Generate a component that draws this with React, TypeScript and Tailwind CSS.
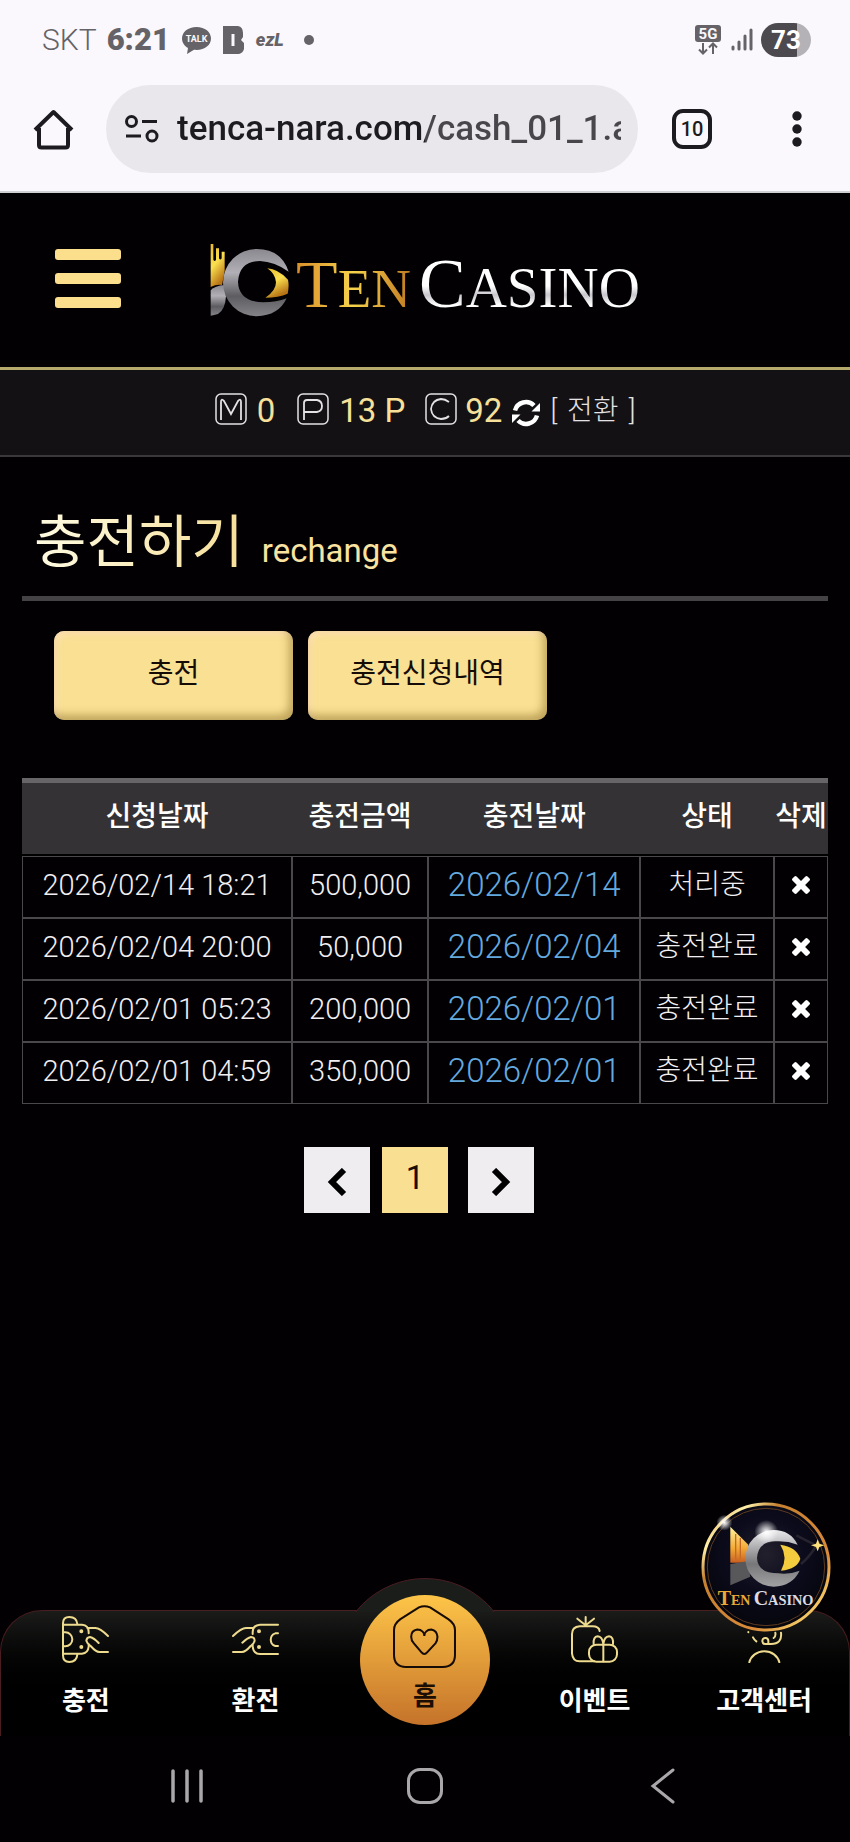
import React from 'react';

const history = [
  { requested: '2026/02/14 18:21', amount: '500,000', date: '2026/02/14', status: '처리중' },
  { requested: '2026/02/04 20:00', amount: '50,000', date: '2026/02/04', status: '충전완료' },
  { requested: '2026/02/01 05:23', amount: '200,000', date: '2026/02/01', status: '충전완료' },
  { requested: '2026/02/01 04:59', amount: '350,000', date: '2026/02/01', status: '충전완료' },
];

const StatusBar: React.FC = () => (
  <div className="flex items-center justify-between pl-[42px] pr-[39px] h-20 text-[#656367]">
    <div className="flex items-center">
      <span className="text-[30px] leading-9 font-light">SKT</span>
      <span className="text-[31px] leading-9 font-black ml-[10px]">6:21</span>
      <svg className="ml-3 w-[29px] h-[27px]" viewBox="0 0 29 27" fill="currentColor">
        <path d="M14.500 0C6 0 0 5 0 11.500c0 4 2.500 7.500 6 9.500l-1 6 7-4.200c10 1 17-4.300 17-11.300C29 5 23 0 14.500 0z" />
        <text x="14.500" y="15" fontSize="9" fontWeight="700" textAnchor="middle" fill="#faf8fc">TALK</text>
      </svg>
      <svg className="ml-3 w-[21px] h-[28px]" viewBox="0 0 21 28" fill="currentColor" fillRule="evenodd">
        <path d="M0 0h15q5 1 5 7v4l-2 3 3 3v6q-1 4-5 5H0zM8.500 8v12h3V8z" />
      </svg>
      <span className="ml-3 text-lg leading-6 font-black italic">ezL</span>
      <span className="ml-5 size-[10px] rounded-full bg-[#656367]" />
    </div>
    <div className="flex items-center">
      <svg className="w-[26px] h-[30px]" viewBox="0 0 26 30">
        <rect width="26" height="17" rx="3" fill="currentColor" />
        <text x="13" y="14" fontSize="15" fontWeight="700" textAnchor="middle" fill="#faf8fc">5G</text>
        <path d="M8 18v10M4 24.500l4 4 4-4M18 29V19M14 22.500l4-4 4 4" fill="none" stroke="currentColor" strokeWidth="2" />
      </svg>
      <svg className="ml-[10px] w-[22px] h-6" viewBox="0 0 22 24" stroke="currentColor" strokeWidth="3" strokeLinecap="round">
        <path d="M2 19v2M8 14v7M14 8v13M20 2v19" />
      </svg>
      <span className="ml-2 w-[50px] h-[34px] rounded-full bg-linear-to-r from-[#4c4a4e] from-72% to-[#b4b2b6] to-72% text-white text-[26px] leading-[34px] font-bold text-center">73</span>
    </div>
  </div>
);

const AddressBar: React.FC = () => (
  <div className="flex items-center pl-[33px] pr-[43px] pt-[5px] pb-[18px] border-b-2 border-[#cfd0d2] text-[#1c1b20]">
    <button aria-label="Home">
      <svg className="w-[41px] h-[41px]" viewBox="0 0 41 41" fill="none" stroke="currentColor" strokeWidth="4" strokeLinejoin="round">
        <path d="M2 21L20.500 3L39 21M6 19V36q0 2.500 2.500 2.500h24q2.500 0 2.500-2.500V19" />
      </svg>
    </button>
    <div className="ml-8 flex-1 min-w-0 h-22 rounded-full bg-[#e9e7ec] flex items-center pl-[19px] pr-[17px]">
      <svg className="w-[34px] h-7 shrink-0" viewBox="0 0 34 28" fill="none" stroke="currentColor" strokeWidth="3">
        <circle cx="6.500" cy="6.500" r="5" />
        <path d="M17 6.500H32M1 21H16" />
        <circle cx="27" cy="21" r="5" />
      </svg>
      <input
        aria-label="Address"
        readOnly
        value="tenca-nara.com/cash_01_1.asp"
        className="ml-[18px] flex-1 min-w-0 h-12 text-[35px] font-medium text-transparent bg-clip-text bg-linear-to-r from-[#1c1b20] from-[248px] to-[#48464b] to-[248px] outline-none"
      />
    </div>
    <button className="ml-[34px] size-10 rounded-[11px] border-4 border-[#1c1b20] text-xl leading-8 font-medium" aria-label="10 tabs">10</button>
    <button className="ml-[75px]" aria-label="More">
      <svg className="w-5 h-10" viewBox="0 0 20 40" fill="currentColor">
        <circle cx="10" cy="7" r="4.700" />
        <circle cx="10" cy="20" r="4.700" />
        <circle cx="10" cy="33" r="4.700" />
      </svg>
    </button>
  </div>
);

const LogoMark: React.FC = () => (
  <svg className="w-20 h-[74px]" viewBox="0 0 240 222">
    <defs>
      <linearGradient id="gold" x1="0" y1="0" x2="0.400" y2="1">
        <stop offset="0" stopColor="#e8b92f" />
        <stop offset="0.500" stopColor="#fbe04f" />
        <stop offset="1" stopColor="#b87416" />
      </linearGradient>
      <linearGradient id="steel" x1="0" y1="0" x2="0" y2="1">
        <stop offset="0" stopColor="#8b8990" />
        <stop offset="0.350" stopColor="#b2b0b6" />
        <stop offset="0.700" stopColor="#5d5c60" />
        <stop offset="1" stopColor="#848388" />
      </linearGradient>
    </defs>
    <path fill="url(#gold)" d="M2 3H10V50q4 8 8 0V16H27V46q4 7 8 0V26H44V84L36 126Q18 124 2 132Z" />
    <path fill="url(#steel)" d="M2 218V142Q14 128 44 126L48 160Q46 200 24 213Q12 217 2 218Z" />
    <path fill="url(#steel)" d="M236 86Q214 18 140 18A101 101 0 0 0 140 220Q206 218 230 166Q200 178 160 178Q86 176 84 116Q88 54 150 54Q194 56 236 86Z" />
    <path fill="url(#gold)" d="M172 76Q204 78 234 110Q238 128 233 152Q206 164 166 164Q198 144 198 118Q196 92 172 76Z" />
  </svg>
);

const SiteHeader: React.FC = () => (
  <header className="grid grid-cols-[1fr_auto_1fr] items-center px-[55px] h-[177px] border-b-[3px] border-[#b5aa6c]">
    <button aria-label="Menu" className="mb-1 flex flex-col gap-[13px] w-[66px]">
      <span className="h-[11px] rounded-[3px] bg-[#fbdf8c]" />
      <span className="h-[11px] rounded-[3px] bg-[#fbdf8c]" />
      <span className="h-[11px] rounded-[3px] bg-[#fbdf8c]" />
    </button>
    <a href="#" className="flex items-center font-['Liberation_Serif',serif] leading-[70px]">
      <LogoMark />
      <span className="ml-[6px] mt-3 text-[68px] text-transparent bg-clip-text bg-linear-to-r from-[#d98f2b] via-[#f6d24b] to-[#c07a22]">
        T<span className="text-[55px]">EN</span>
      </span>
      <span className="ml-2 mt-3 text-[70px] text-transparent bg-clip-text bg-linear-to-b from-white from-50% via-[#c9c7cd] via-62% to-white to-76%">
        C<span className="text-[57px]">ASINO</span>
      </span>
    </a>
  </header>
);

const LetterIcon: React.FC<{ d: string; label: string }> = ({ d, label }) => (
  <svg role="img" aria-label={label} className="w-8 h-8 mb-1" viewBox="0 0 32 32" fill="none" stroke="#e4e2e5" strokeWidth="1.500">
    <rect x="1" y="1" width="30" height="30" rx="5" />
    <path d={d} strokeWidth="1.800" />
  </svg>
);

const Balance: React.FC = () => (
  <div className="flex items-center justify-center h-[87px] pb-1 bg-[#131114] border-b-2 border-[#3a383b] text-[33px] leading-10 text-[#f7e09a]">
    <LetterIcon label="Money" d="M6 27V9q0-4 3-1l7 13 7-13q3-3 3 1v18" />
    <span className="ml-[10px]">0</span>
    <span className="ml-[22px]"><LetterIcon label="Point" d="M7 27V10q0-3 3-3h10q5 1 5 6t-5 6H7" /></span>
    <span className="ml-[10px]">13 P</span>
    <span className="ml-5"><LetterIcon label="Coupon" d="M24 9q-4-3-8-3-9 1-10 10 1 9 10 10 5 0 8-3" /></span>
    <span className="ml-2">92</span>
    <button className="ml-[10px] flex items-center text-[28px] font-light text-[#e4e2e5]">
      <svg className="w-7 h-7 mt-1" viewBox="0 0 28 28" fill="#fff">
        <path d="M3 11.500A11.300 11.300 0 0 1 22 6.500" fill="none" stroke="#fff" strokeWidth="4.500" />
        <path d="M28 4v8.500h-8.500z" />
        <path d="M25 16.500A11.300 11.300 0 0 1 6 21.500" fill="none" stroke="#fff" strokeWidth="4.500" />
        <path d="M0 24v-8.500h8.500z" />
      </svg>
      <span className="ml-[10px] flex gap-[10px]"><span>[</span><span>전환</span><span>]</span></span>
    </button>
  </div>
);

const GoldButton: React.FC<{ children: React.ReactNode }> = ({ children }) => (
  <button className="w-[239px] h-[89px] pb-1 rounded-[10px] bg-[#f9e093] text-[28px] text-[#150c08] shadow-[inset_-4px_-5px_8px_rgba(120,90,20,0.45),inset_3px_3px_6px_rgba(255,225,185,0.9)]">
    {children}
  </button>
);

const HistoryTable: React.FC = () => (
  <table className="mt-[58px] w-full table-fixed border-separate border-spacing-0 text-[28px] leading-9 text-center text-[#f1eff2]">
    <colgroup>
      <col className="w-[33.5%]" />
      <col className="w-[16.9%]" />
      <col className="w-[26.3%]" />
      <col className="w-[16.6%]" />
      <col className="w-[6.7%]" />
    </colgroup>
    <thead>
      <tr className="h-[78px]">
        {['신청날짜', '충전금액', '충전날짜', '상태', '삭제'].map((title) => (
          <th key={title} className="p-0 pb-1 whitespace-nowrap font-medium text-white bg-[#343234] bg-clip-padding border-t-[5px] border-t-[#676567] border-b-2 border-b-black">
            {title}
          </th>
        ))}
      </tr>
    </thead>
    <tbody>
      {history.map((row) => (
        <tr key={row.requested} className="h-[62px] font-light">
          <td className="p-0 pb-1 border border-[#4a484b] text-[29px]">{row.requested}</td>
          <td className="p-0 pb-1 border border-[#4a484b] text-[29px]">{row.amount}</td>
          <td className="p-0 pb-1 border border-[#4a484b] text-[33px] text-[#64a9de]">{row.date}</td>
          <td className="p-0 pb-1 border border-[#4a484b]">{row.status}</td>
          <td className="p-0 pb-1 border border-[#4a484b]">
            <button aria-label="삭제" className="block mx-auto">
              <svg className="size-[18px]" viewBox="110 366 1188 1188" fill="#fff">
                <path d="M1298 1322q0 40-28 68l-136 136q-28 28-68 28t-68-28l-294-294-294 294q-28 28-68 28t-68-28l-136-136q-28-28-28-68t28-68l294-294-294-294q-28-28-28-68t28-68l136-136q28-28 68-28t68 28l294 294 294-294q28-28 68-28t68 28l136 136q28 28 28 68t-28 68l-294 294 294 294q28 28 28 68z" />
              </svg>
            </button>
          </td>
        </tr>
      ))}
    </tbody>
  </table>
);

const Pagination: React.FC = () => (
  <div className="mt-[43px] pr-3 flex justify-center">
    <button aria-label="Previous" className="size-[66px] pt-1 bg-[#efedf0] flex items-center justify-center">
      <svg className="w-5 h-7" viewBox="0 0 20 28" fill="none" stroke="#000" strokeWidth="6"><path d="M17 2L5 14L17 26" /></svg>
    </button>
    <button aria-current="page" className="ml-3 size-[66px] pb-1 bg-[#f9df92] text-[33px] text-[#1a0f08]">1</button>
    <button aria-label="Next" className="ml-5 size-[66px] pt-1 bg-[#efedf0] flex items-center justify-center">
      <svg className="w-5 h-7" viewBox="0 0 20 28" fill="none" stroke="#000" strokeWidth="6"><path d="M3 2L15 14L3 26" /></svg>
    </button>
  </div>
);

const LineIcon: React.FC<{ children: React.ReactNode }> = ({ children }) => (
  <svg className="size-[47px]" viewBox="0 0 141 141" fill="none" stroke="#eedb8e" strokeWidth="6" strokeLinecap="round">
    {children}
  </svg>
);

const NavItem: React.FC<{ label: string; children: React.ReactNode }> = ({ label, children }) => (
  <a href="#" className="flex-1 flex flex-col items-center pt-[5px]">
    <LineIcon>{children}</LineIcon>
    <span className="mt-5 text-[26px] leading-9 font-bold">{label}</span>
  </a>
);

const Badge: React.FC = () => (
  <a href="#" aria-label="Ten Casino" className="absolute right-[19px] -top-[108px] z-20">
    <svg className="w-[130px] h-[130px]" viewBox="0 0 390 390">
      <defs>
        <radialGradient id="disc" cx="0.500" cy="0.400" r="0.600">
          <stop offset="0" stopColor="#23202c" />
          <stop offset="0.500" stopColor="#0b0b1c" />
          <stop offset="1" stopColor="#06060c" />
        </radialGradient>
        <linearGradient id="rim" x1="0" y1="0" x2="1" y2="1">
          <stop offset="0" stopColor="#c8742a" />
          <stop offset="0.180" stopColor="#fff0a8" />
          <stop offset="0.300" stopColor="#c5802f" />
          <stop offset="0.700" stopColor="#d98a3a" />
          <stop offset="0.850" stopColor="#f4c662" />
          <stop offset="1" stopColor="#a85b20" />
        </linearGradient>
        <radialGradient id="glow">
          <stop offset="0" stopColor="#fff" />
          <stop offset="1" stopColor="#fff" stopOpacity="0" />
        </radialGradient>
        <linearGradient id="badge-side" x1="0" y1="0" x2="0" y2="1">
          <stop offset="0" stopColor="#fff3a0" />
          <stop offset="0.600" stopColor="#f3a935" />
          <stop offset="1" stopColor="#c95f22" />
        </linearGradient>
        <linearGradient id="badge-ring" x1="0" y1="0" x2="0" y2="1">
          <stop offset="0" stopColor="#e9e9ec" />
          <stop offset="0.600" stopColor="#77777a" />
          <stop offset="1" stopColor="#a2a2a5" />
        </linearGradient>
      </defs>
      <circle cx="195" cy="195" r="189" fill="url(#disc)" stroke="url(#rim)" strokeWidth="9" />
      <circle cx="195" cy="195" r="176" fill="none" stroke="#5e3a20" strokeWidth="3" />
      <path d="M88 74L142 128L136 182H88Z" fill="url(#badge-side)" />
      <path d="M104 96V172M118 108V172" stroke="#c46a25" strokeWidth="4" />
      <path d="M88 186L140 178L148 224L88 250Z" fill="#58585b" />
      <path d="M290 128Q268 84 218 84A84 84 0 0 0 218 254Q274 252 296 206Q266 218 232 214Q170 214 168 168Q172 118 224 118Q258 116 290 128Z" fill="url(#badge-ring)" />
      <path d="M238 128Q286 134 298 170Q290 200 240 206Q262 166 238 128Z" fill="#f4cd3e" />
      <path d="M286 100Q316 116 346 130Q330 160 300 186" fill="none" stroke="#26222e" strokeWidth="8" />
      <path d="M350 112L355 125L370 130L355 135L350 148L345 135L330 130L345 125Z" fill="#ffe07a" />
      <circle cx="196" cy="90" r="36" fill="url(#glow)" />
      <circle cx="70" cy="62" r="24" fill="url(#glow)" />
      <g fontFamily="Liberation Serif, serif" fontWeight="700">
        <text x="50" y="310" fontSize="60" fill="#e9ab35">T<tspan fontSize="42">EN</tspan></text>
        <text x="158" y="310" fontSize="60" fill="#dcdce2">C<tspan fontSize="43">ASINO</tspan></text>
      </g>
    </svg>
  </a>
);

const BottomNav: React.FC = () => (
  <div className="relative">
    <nav className="flex h-[126px] rounded-t-[42px] border border-b-0 border-[#4a1d20] bg-linear-to-b from-[#1b1c1a] to-black to-75%">
      <NavItem label="충전">
        <path d="M3 118V22Q3 3 22 3Q44 3 46 24M3 118Q3 138 22 138Q44 138 46 116M3 26H60Q80 28 80 48V52M80 84V92Q78 112 60 113H3M3 49H10A21 21 0 0 1 10 91H3M76 36H100Q114 36 138 60M110 81Q96 66 84 63Q74 64 73 74Q76 84 86 90Q102 108 112 108H138" />
        <circle cx="58" cy="46" r="3" />
        <circle cx="58" cy="93" r="3" />
      </NavItem>
      <NavItem label="환전">
        <path d="M138 26H84Q62 28 62 48V54M62 84V92Q64 113 84 114H138M138 52H130A20 20 0 0 0 130 90H138M66 36H42Q28 36 3 60M31 80Q46 66 57 63Q68 64 68 74Q66 84 56 90Q40 108 30 108H3" />
        <circle cx="81" cy="46" r="3" />
        <circle cx="81" cy="93" r="3" />
      </NavItem>
      <div className="flex-1 flex justify-center">
        {/* hump behind the home button, cut off at the bar's top edge */}
        <div className="absolute -top-8 w-[180px] h-[34px] overflow-hidden">
          <div className="mx-px size-[178px] rounded-full border border-[#4a1d24] bg-[#1b1d1b]" />
        </div>
        <a href="#" className="relative z-10 -mt-4 size-[130px] shrink-0 rounded-full bg-linear-to-b from-[#fdc548] to-[#c5732a] flex flex-col items-center pt-[10px]">
          <svg className="size-[63px]" viewBox="0 0 187 187" fill="none" stroke="#160b05" strokeWidth="6" strokeLinejoin="round">
            <path d="M110 7L164 42Q184 56 184 74V148Q184 184 148 184H38Q3 184 3 148V74Q3 56 22 42L77 7Q93 0 110 7Z" />
            <path d="M93 92Q93 84 88 79Q82 73 72 73Q54 76 54 94Q54 106 62 114L84 140Q93 151 102 140L126 114Q132 106 132 94Q130 76 114 73Q104 73 98 79Q93 84 93 92" />
          </svg>
          <span className="mt-[10px] text-[26px] leading-9 font-bold text-[#1b0e05]">홈</span>
        </a>
      </div>
      <NavItem label="이벤트">
        <path d="M86 45Q84 31 64 31H26Q3 33 3 54V112Q5 136 26 136H70M44 26V3M44 28L19 8M44 28L69 8" />
        <rect x="54" y="86" width="84" height="51" rx="22" />
        <path d="M97 86V136M97 84Q94 62 80 61Q66 62 68 84M97 84Q100 62 114 61Q128 62 126 84" />
      </NavItem>
      <NavItem label="고객센터">
        <path d="M25 139A46 42 0 0 1 115 139M120 50Q124 84 90 84H74A9 9 0 1 1 82 74V84M103 50Q105 62 98 66M36 64Q40 72 46 76M22 49V48" />
      </NavItem>
    </nav>
    <Badge />
  </div>
);

const SystemNav: React.FC = () => (
  <div className="flex h-[106px] pb-[6px] items-center justify-center gap-[202px] text-[#a9a7aa]">
    <button aria-label="Recent apps">
      <svg className="w-9 h-9" viewBox="0 0 36 36" stroke="currentColor" strokeWidth="3.500" strokeLinecap="round">
        <path d="M4 3V33M18 3V33M32 3V33" />
      </svg>
    </button>
    <button aria-label="Home screen" className="w-9 h-9 rounded-[13px] border-[3px] border-[#a9a7aa]" />
    <button aria-label="Back">
      <svg className="w-9 h-9" viewBox="0 0 36 36" fill="none" stroke="currentColor" strokeWidth="3" strokeLinecap="round">
        <path d="M28 2L8 18L28 34" />
      </svg>
    </button>
  </div>
);

const App: React.FC = () => {
  return (
    <div className="min-h-screen flex flex-col bg-[#020003] text-white font-['Roboto','Noto_Sans_CJK_KR',sans-serif]">
      <div className="bg-[#faf8fc]">
        <StatusBar />
        <AddressBar />
      </div>
      <SiteHeader />
      <Balance />
      <main className="flex-1 px-[22px] pt-[46px]">
        <div className="flex items-baseline gap-[18px] pl-3 h-[98px] border-b-[5px] border-[#444245]">
          <h1 className="text-[57px] leading-[80px] text-transparent bg-clip-text bg-linear-to-r from-[#fffbe2] to-[#f6df98]">충전하기</h1>
          <span className="text-[33px] leading-10 text-[#f8e3a1]">rechange</span>
        </div>
        <div className="mt-[30px] pl-8 flex gap-[15px]">
          <GoldButton>충전</GoldButton>
          <GoldButton>충전신청내역</GoldButton>
        </div>
        <HistoryTable />
        <Pagination />
      </main>
      <BottomNav />
      <SystemNav />
    </div>
  );
};

export default App;
